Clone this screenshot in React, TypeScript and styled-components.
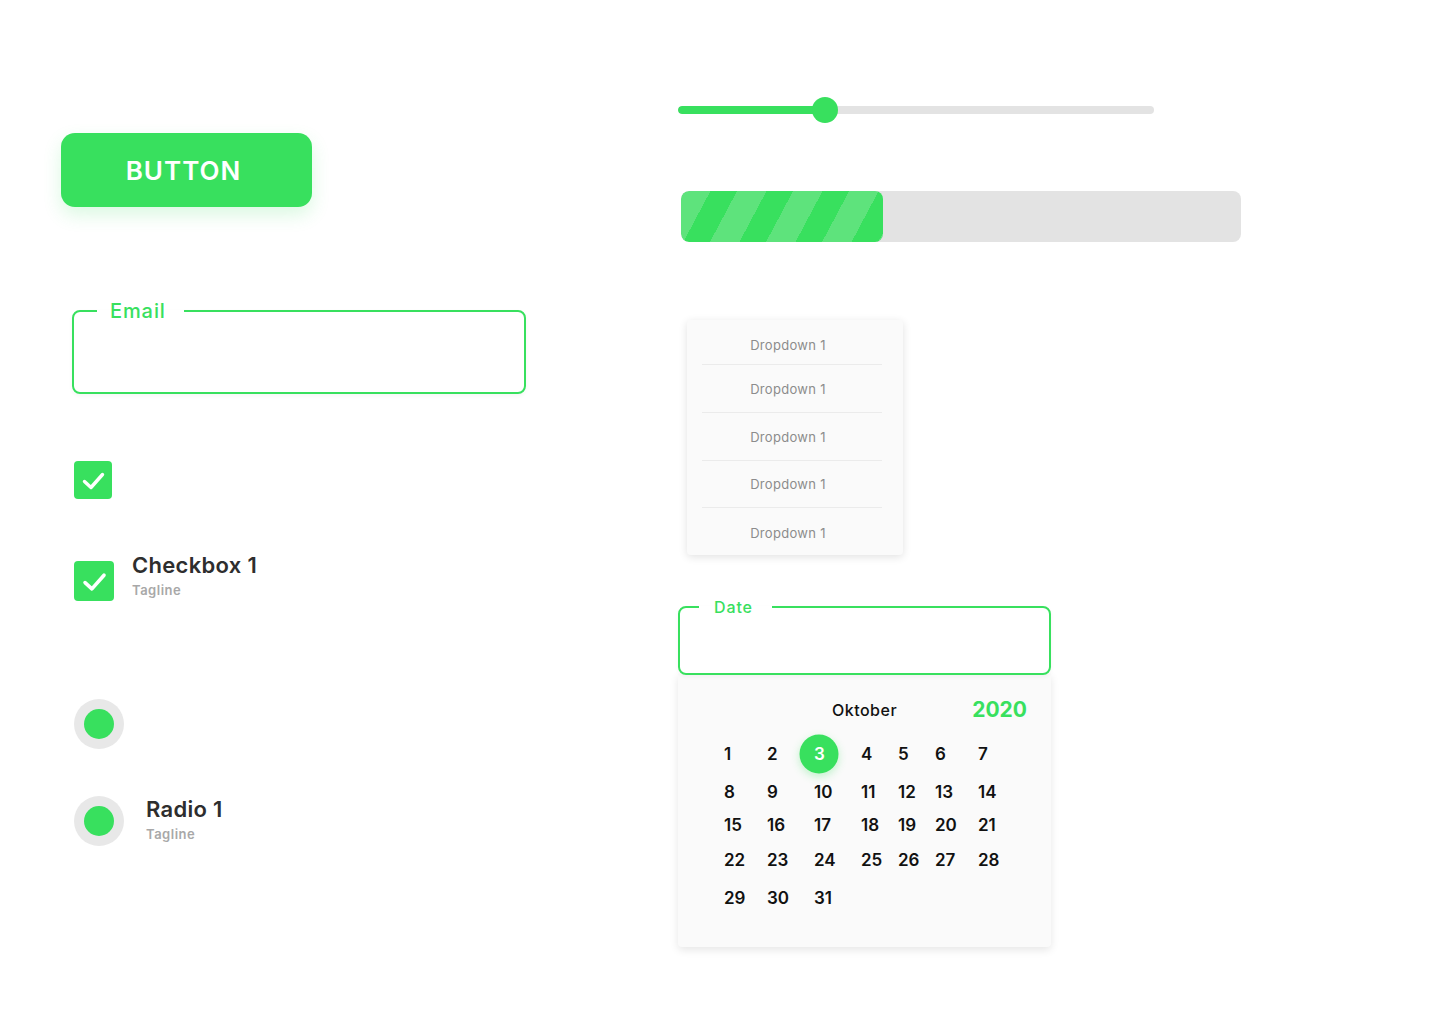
import React from "react";
import styled, { createGlobalStyle, css } from "styled-components";

const GREEN = "#38E05E";
const GREEN_LIGHT = "#5EE37C";

const Global = createGlobalStyle`
  html, body { margin: 0; padding: 0; background: #fff; }
  body { font-family: Inter, "Noto Sans", sans-serif; -webkit-font-smoothing: antialiased; }
  * { box-sizing: border-box; }
`;

const Page = styled.div`
  display: flex;
  align-items: flex-start;
  width: 1440px;
  min-height: 1024px;
`;

const LeftCol = styled.div`
  width: 678px;
  padding: 133px 0 0 61px;
  display: flex;
  flex-direction: column;
  align-items: flex-start;
`;

const RightCol = styled.div`
  flex: 1;
  padding-top: 97px;
  display: flex;
  flex-direction: column;
  align-items: flex-start;
`;

const PrimaryButton = styled.button`
  width: 251px;
  height: 74px;
  padding: 0 6px 0 0;
  border: none;
  border-radius: 14px;
  background: ${GREEN};
  color: #fff;
  font-family: inherit;
  font-size: 26px;
  font-weight: 600;
  letter-spacing: 1px;
  box-shadow: 0 8px 18px rgba(56, 224, 94, 0.18);
  cursor: pointer;
`;

const Field = styled.fieldset<{ $width: number; $height: number; $inset: number; $mt: number; $ml: number }>`
  margin: ${(p) => p.$mt}px 0 0 ${(p) => p.$ml}px;
  width: ${(p) => p.$width}px;
  height: ${(p) => p.$height}px;
  padding: 0 0 0 ${(p) => p.$inset}px;
  border: 2px solid ${GREEN};
  border-radius: 8px;
  min-width: 0;
  background: #fff;
  position: relative;
  z-index: 1;
  box-shadow: 0 2px 4px rgba(0, 0, 0, 0.04);
`;

const FieldLabel = styled.legend<{ $size: number; $pl: number; $pr: number }>`
  padding: 0 ${(p) => p.$pr}px 0 ${(p) => p.$pl}px;
  font-size: ${(p) => p.$size}px;
  line-height: ${(p) => p.$size + 4}px;
  font-weight: 500;
  color: ${GREEN};
  letter-spacing: 0.9px;
`;

const CheckBox = styled.div<{ $size: number }>`
  width: ${(p) => p.$size}px;
  height: ${(p) => p.$size}px;
  border-radius: 4px;
  background: ${GREEN};
  display: flex;
  align-items: center;
  justify-content: center;
  flex-shrink: 0;
`;

const SoloCheck = styled.div`
  margin: 67px 0 0 13px;
`;

const OptionRow = styled.div<{ $mt: number; $gap: number }>`
  display: flex;
  align-items: flex-start;
  gap: ${(p) => p.$gap}px;
  margin: ${(p) => p.$mt}px 0 0 13px;
`;

const BoxSlot = styled.div<{ $mt: number }>`
  margin-top: ${(p) => p.$mt}px;
`;

const OptionText = styled.div<{ $mt: number }>`
  display: flex;
  flex-direction: column;
  gap: 4px;
  margin-top: ${(p) => p.$mt}px;
`;

const OptionTitle = styled.div`
  font-size: 22px;
  line-height: 24px;
  font-weight: 600;
  color: #2e2e2e;
  letter-spacing: 0.3px;
`;

const OptionTagline = styled.div`
  font-size: 13px;
  line-height: 18px;
  font-weight: 600;
  color: #a8a8a8;
  letter-spacing: 0.5px;
`;

const Radio = styled.div`
  width: 50px;
  height: 50px;
  border-radius: 50%;
  background: #e8e8e8;
  display: flex;
  align-items: center;
  justify-content: center;
  flex-shrink: 0;
  &::after {
    content: "";
    width: 30px;
    height: 30px;
    border-radius: 50%;
    background: ${GREEN};
  }
`;

const SoloRadio = styled.div`
  margin: 98px 0 0 13px;
`;

/* Slider */
const Slider = styled.div`
  position: relative;
  width: 476px;
  height: 26px;
  display: flex;
  align-items: center;
`;

const SliderTrack = styled.div`
  width: 100%;
  height: 8px;
  border-radius: 4px;
  background: #e3e3e3;
  overflow: hidden;
`;

const SliderFill = styled.div`
  height: 100%;
  background: ${GREEN};
  border-radius: 4px;
`;

const SliderThumb = styled.div`
  position: absolute;
  top: 0;
  width: 26px;
  height: 26px;
  margin-left: -13px;
  border-radius: 50%;
  background: ${GREEN};
`;

/* Progress */
const Progress = styled.div`
  margin: 68px 0 0 3px;
  width: 560px;
  height: 51px;
  border-radius: 8px;
  background: #e3e3e3;
  overflow: hidden;
`;

const ProgressFill = styled.div`
  height: 100%;
  border-radius: 8px;
  background: repeating-linear-gradient(
    118deg,
    ${GREEN_LIGHT} 0px,
    ${GREEN_LIGHT} 26px,
    ${GREEN} 26px,
    ${GREEN} 49.5px
  );
`;

/* Dropdown */
const Dropdown = styled.div`
  margin: 78px 0 0 9px;
  width: 216px;
  padding: 0 21px 0 15px;
  background: #fafafa;
  border-radius: 4px;
  box-shadow: 0 2px 8px rgba(0, 0, 0, 0.12);
`;

const DropdownItem = styled.div<{ $h: number; $pt: number }>`
  height: ${(p) => p.$h}px;
  padding: ${(p) => p.$pt}px 8px 0 0;
  display: flex;
  align-items: center;
  justify-content: center;
  font-size: 13px;
  color: #8c8c8c;
  letter-spacing: 0.3px;
  border-bottom: 1px solid #ebebeb;
  &:last-child {
    border-bottom: none;
  }
`;

/* Calendar */
const Calendar = styled.div`
  width: 373px;
  height: 273px;
  margin-top: -1px;
  padding: 23px 24px 0 46px;
  background: #fafafa;
  box-shadow: 0 3px 8px rgba(0, 0, 0, 0.1);
  border-radius: 0 0 4px 4px;
`;

const CalHeader = styled.div`
  margin-left: -22px;
  display: grid;
  grid-template-columns: 1fr auto 1fr;
  align-items: center;
  height: 24px;
`;

const Month = styled.div`
  grid-column: 2;
  font-size: 16px;
  font-weight: 500;
  color: #111;
  letter-spacing: 0.5px;
`;

const Year = styled.div`
  justify-self: end;
  font-size: 21px;
  font-weight: 700;
  color: ${GREEN};
`;

const DayGrid = styled.div`
  margin-top: 18px;
  display: grid;
  grid-template-columns: 43px 47px 47px 37px 37px 43px 40px;
  grid-template-rows: 38px 33px 35px 38px 30px;
  align-items: start;
  justify-items: start;
`;

const Day = styled.div<{ $selected?: boolean }>`
  font-size: 17px;
  line-height: 30px;
  font-weight: 600;
  color: #111;
  ${(p) =>
    p.$selected &&
    css`
      position: relative;
      isolation: isolate;
      color: #fff;
      &::before {
        content: "";
        position: absolute;
        left: 50%;
        top: 50%;
        width: 39px;
        height: 39px;
        transform: translate(-50%, -50%);
        border-radius: 50%;
        background: ${GREEN};
        box-shadow: 0 3px 8px rgba(56, 224, 94, 0.3);
        z-index: -1;
      }
    `}
`;

const Check = ({ size }: { size: number }) => (
  <svg width={size} height={size} viewBox="0 0 38 38" fill="none">
    <path d="M10.5 20.5 L17 26.5 L28.5 13.5" stroke="#fff" strokeWidth="3.4" strokeLinecap="round" strokeLinejoin="round" />
  </svg>
);

const dropdownItems = [
  { h: 45, pt: 5 },
  { h: 48, pt: 0 },
  { h: 48, pt: 0 },
  { h: 47, pt: 0 },
  { h: 47, pt: 2 },
];

const days = Array.from({ length: 31 }, (_, i) => i + 1);

export default function App() {
  const sliderValue = 147 / 476;
  const progressValue = 202 / 560;
  return (
    <>
      <Global />
      <Page>
        <LeftCol>
          <PrimaryButton>BUTTON</PrimaryButton>

          <Field $width={454} $height={95} $inset={23} $mt={92} $ml={11}>
            <FieldLabel $size={20} $pl={13} $pr={18}>Email</FieldLabel>
          </Field>

          <SoloCheck>
            <CheckBox $size={38}>
              <Check size={38} />
            </CheckBox>
          </SoloCheck>

          <OptionRow $mt={54} $gap={18}>
            <BoxSlot $mt={8}>
              <CheckBox $size={40}>
                <Check size={40} />
              </CheckBox>
            </BoxSlot>
            <OptionText $mt={0}>
              <OptionTitle>Checkbox 1</OptionTitle>
              <OptionTagline>Tagline</OptionTagline>
            </OptionText>
          </OptionRow>

          <SoloRadio>
            <Radio />
          </SoloRadio>

          <OptionRow $mt={47} $gap={22}>
            <Radio />
            <OptionText $mt={1}>
              <OptionTitle>Radio 1</OptionTitle>
              <OptionTagline>Tagline</OptionTagline>
            </OptionText>
          </OptionRow>
        </LeftCol>

        <RightCol>
          <Slider>
            <SliderTrack>
              <SliderFill style={{ width: `${sliderValue * 100}%` }} />
            </SliderTrack>
            <SliderThumb style={{ left: `${sliderValue * 100}%` }} />
          </Slider>

          <Progress>
            <ProgressFill style={{ width: `${progressValue * 100}%` }} />
          </Progress>

          <Dropdown>
            {dropdownItems.map((it, i) => (
              <DropdownItem key={i} $h={it.h} $pt={it.pt}>
                Dropdown 1
              </DropdownItem>
            ))}
          </Dropdown>

          <Field $width={373} $height={78} $inset={19} $mt={42} $ml={0}>
            <FieldLabel $size={16} $pl={15} $pr={19}>Date</FieldLabel>
          </Field>

          <Calendar>
            <CalHeader>
              <Month>Oktober</Month>
              <Year>2020</Year>
            </CalHeader>
            <DayGrid>
              {days.map((d) => (
                <Day key={d} $selected={d === 3}>
                  {d}
                </Day>
              ))}
            </DayGrid>
          </Calendar>
        </RightCol>
      </Page>
    </>
  );
}
